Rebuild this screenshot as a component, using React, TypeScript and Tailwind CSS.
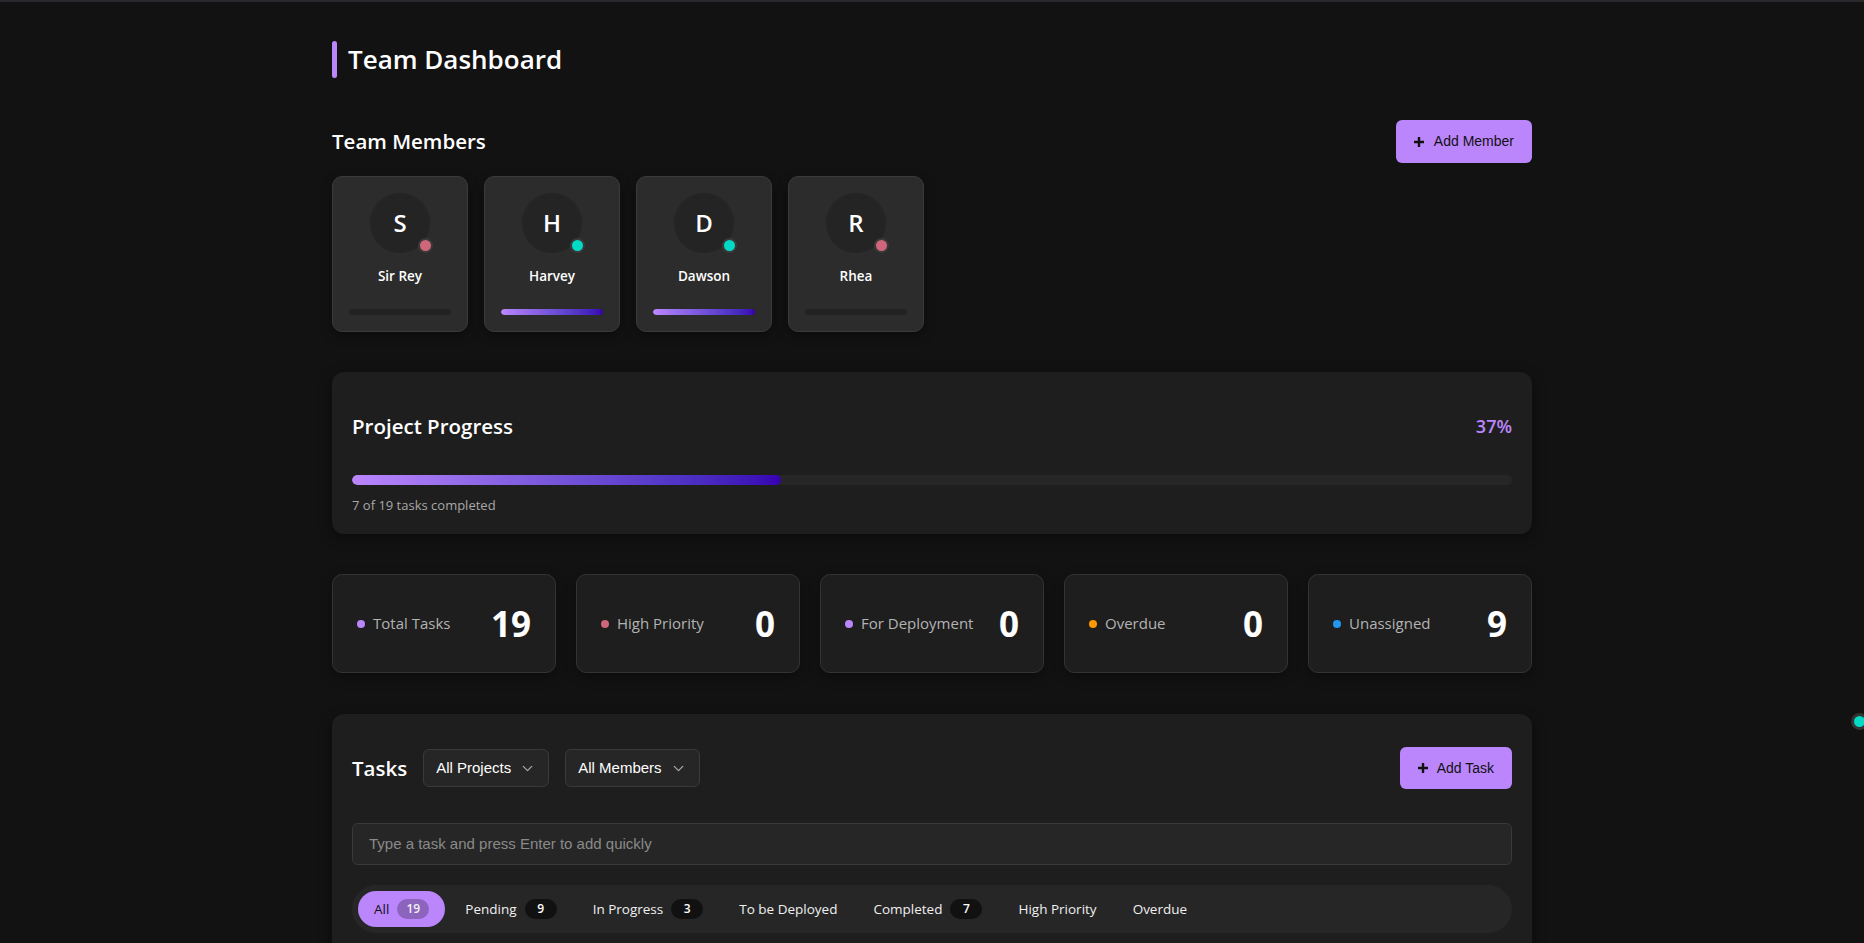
import React from "react";
import { ChevronDown } from "lucide-react";

const sans = "font-['Segoe_UI','Open_Sans',sans-serif]";
const arial = "font-['Liberation_Sans',Arial,sans-serif]";

function PlusIcon() {
  return (
    <svg width="10" height="10" viewBox="0 0 10 10" className="shrink-0">
      <path d="M5 0v10M0 5h10" stroke="#111" strokeWidth="2.4" />
    </svg>
  );
}

const members = [
  { l: "S", name: "Sir Rey", status: "bg-[#cf6679]", full: false },
  { l: "H", name: "Harvey", status: "bg-[#03dac6]", full: true },
  { l: "D", name: "Dawson", status: "bg-[#03dac6]", full: true },
  { l: "R", name: "Rhea", status: "bg-[#cf6679]", full: false },
];

const stats = [
  { label: "Total Tasks", value: "19", dot: "bg-[#bb86fc]" },
  { label: "High Priority", value: "0", dot: "bg-[#cf6679]" },
  { label: "For Deployment", value: "0", dot: "bg-[#bb86fc]" },
  { label: "Overdue", value: "0", dot: "bg-[#ff9800]" },
  { label: "Unassigned", value: "9", dot: "bg-[#2196f3]" },
];

const tabs: { label: string; count?: string; active?: boolean }[] = [
  { label: "All", count: "19", active: true },
  { label: "Pending", count: "9" },
  { label: "In Progress", count: "3" },
  { label: "To be Deployed" },
  { label: "Completed", count: "7" },
  { label: "High Priority" },
  { label: "Overdue" },
];

export default function App() {
  return (
    <div className={`relative h-screen overflow-hidden bg-[#121212] border-t-2 border-[#2a2a2e] text-white ${sans}`}>
      <div className="mx-auto w-[1200px] pt-[39px]">
        <div className="flex items-center gap-[11px]">
          <span className="w-[5px] h-[37px] rounded-full bg-[#bb86fc]" />
          <h1 className="text-[26px] leading-[37px] font-semibold text-white">Team Dashboard</h1>
        </div>

        <div className="mt-[42px] flex items-center justify-between h-[43px]">
          <h2 className="text-[20.5px] font-semibold">Team Members</h2>
          <button className={`flex items-center gap-[10px] h-[43px] px-[18px] rounded-md bg-[#bb86fc] text-[#111] text-[14px] ${arial}`}>
            <PlusIcon />
            Add Member
          </button>
        </div>

        <div className="mt-[13px] flex gap-4">
          {members.map((m) => (
            <div
              key={m.name}
              className="w-[136px] p-4 rounded-[10px] border border-[#3a3a3a] bg-[#2c2c2c] shadow-[0_4px_12px_rgba(0,0,0,0.35)] flex flex-col items-center"
            >
              <div className="relative w-[60px] h-[60px] rounded-full bg-[#242424] flex items-center justify-center">
                <span className="text-[24px] font-semibold">{m.l}</span>
                <span className={`absolute bottom-0 right-[-3px] w-[15px] h-[15px] rounded-full border-2 border-[#3a3a3a] ${m.status}`} />
              </div>
              <div className="mt-[13px] text-[13.5px] leading-[20px] font-semibold">{m.name}</div>
              <div className="mt-[23px] w-full h-[6px] rounded-full bg-[#222222] overflow-hidden">
                {m.full && <div className="h-full w-full rounded-full bg-gradient-to-r from-[#bb86fc] to-[#3700b3]" />}
              </div>
            </div>
          ))}
        </div>

        <div className="mt-[40px] rounded-xl bg-[#1e1e1e] px-5 pt-5 pb-[19px] shadow-[0_4px_14px_rgba(0,0,0,0.4)]">
          <div className="h-[68px] flex items-center justify-between">
            <h2 className="text-[20.5px] font-semibold">Project Progress</h2>
            <span className="text-[18px] font-semibold text-[#bb86fc]">37%</span>
          </div>
          <div className="mt-[15px] h-[10px] rounded-full bg-[#262626] overflow-hidden">
            <div className="h-full rounded-full bg-gradient-to-r from-[#bb86fc] to-[#3700b3]" style={{ width: "37%" }} />
          </div>
          <div className="mt-[10px] text-[13px] leading-[20px] text-[#a8a8a8]">7 of 19 tasks completed</div>
        </div>

        <div className="mt-[40px] grid grid-cols-5 gap-5">
          {stats.map((s) => (
            <div
              key={s.label}
              className="h-[99px] px-6 rounded-[10px] border border-[#333333] bg-[#1e1e1e] shadow-[0_4px_12px_rgba(0,0,0,0.35)] flex items-center justify-between"
            >
              <div className="flex items-center gap-2">
                <span className={`w-2 h-2 rounded-full ${s.dot}`} />
                <span className="text-[15px] text-[#b3b3b3]">{s.label}</span>
              </div>
              <span className="text-[35px] leading-none font-bold">{s.value}</span>
            </div>
          ))}
        </div>

        <div className="mt-[41px] rounded-xl bg-[#1e1e1e] px-5 pt-5 pb-10 shadow-[0_4px_14px_rgba(0,0,0,0.4)]">
          <div className="h-[68px] flex items-center justify-between">
            <div className="flex items-center gap-4">
              <h2 className="text-[20.5px] font-semibold">Tasks</h2>
              {["All Projects", "All Members"].map((t) => (
                <div
                  key={t}
                  className={`h-[38px] pl-3 pr-3 flex items-center gap-2 rounded-md border border-[#3a3a3a] bg-[#262626] text-[15px] text-white ${arial}`}
                >
                  {t}
                  <ChevronDown size={17} strokeWidth={1.75} className="text-[#aaaaaa]" />
                </div>
              ))}
            </div>
            <button className={`flex items-center gap-[9px] h-[42px] px-[18px] rounded-md bg-[#bb86fc] text-[#111] text-[14px] ${arial}`}>
              <PlusIcon />
              Add Task
            </button>
          </div>

          <div className={`mt-[21px] h-[42px] flex items-center px-4 rounded-md border border-[#3a3a3a] bg-[#262626] text-[15px] text-[#8a8a8a] ${arial}`}>
            Type a task and press Enter to add quickly
          </div>

          <div className="mt-5 p-1.5 rounded-full bg-[#262626] flex items-center gap-1">
            {tabs.map((t) => (
              <div
                key={t.label}
                className={`h-9 px-4 rounded-full flex items-center gap-2 text-[13.5px] ${
                  t.active ? "bg-[#bb86fc] text-[#111]" : "text-[#f0f0f0]"
                }`}
              >
                {t.label}
                {t.count && (
                  <span
                    className={`min-w-[32px] h-5 px-2 rounded-full flex items-center justify-center text-[12px] font-semibold ${
                      t.active ? "bg-black/25 text-[#f0f0f0]" : "bg-[#111111] text-white"
                    }`}
                  >
                    {t.count}
                  </span>
                )}
              </div>
            ))}
          </div>
          <div className="h-[200px]" />
        </div>
      </div>

      <div className="absolute left-[1851px] top-[711px] w-[17px] h-[17px] rounded-full bg-[#03dac6] border-[3px] border-[#333333]" />
    </div>
  );
}
